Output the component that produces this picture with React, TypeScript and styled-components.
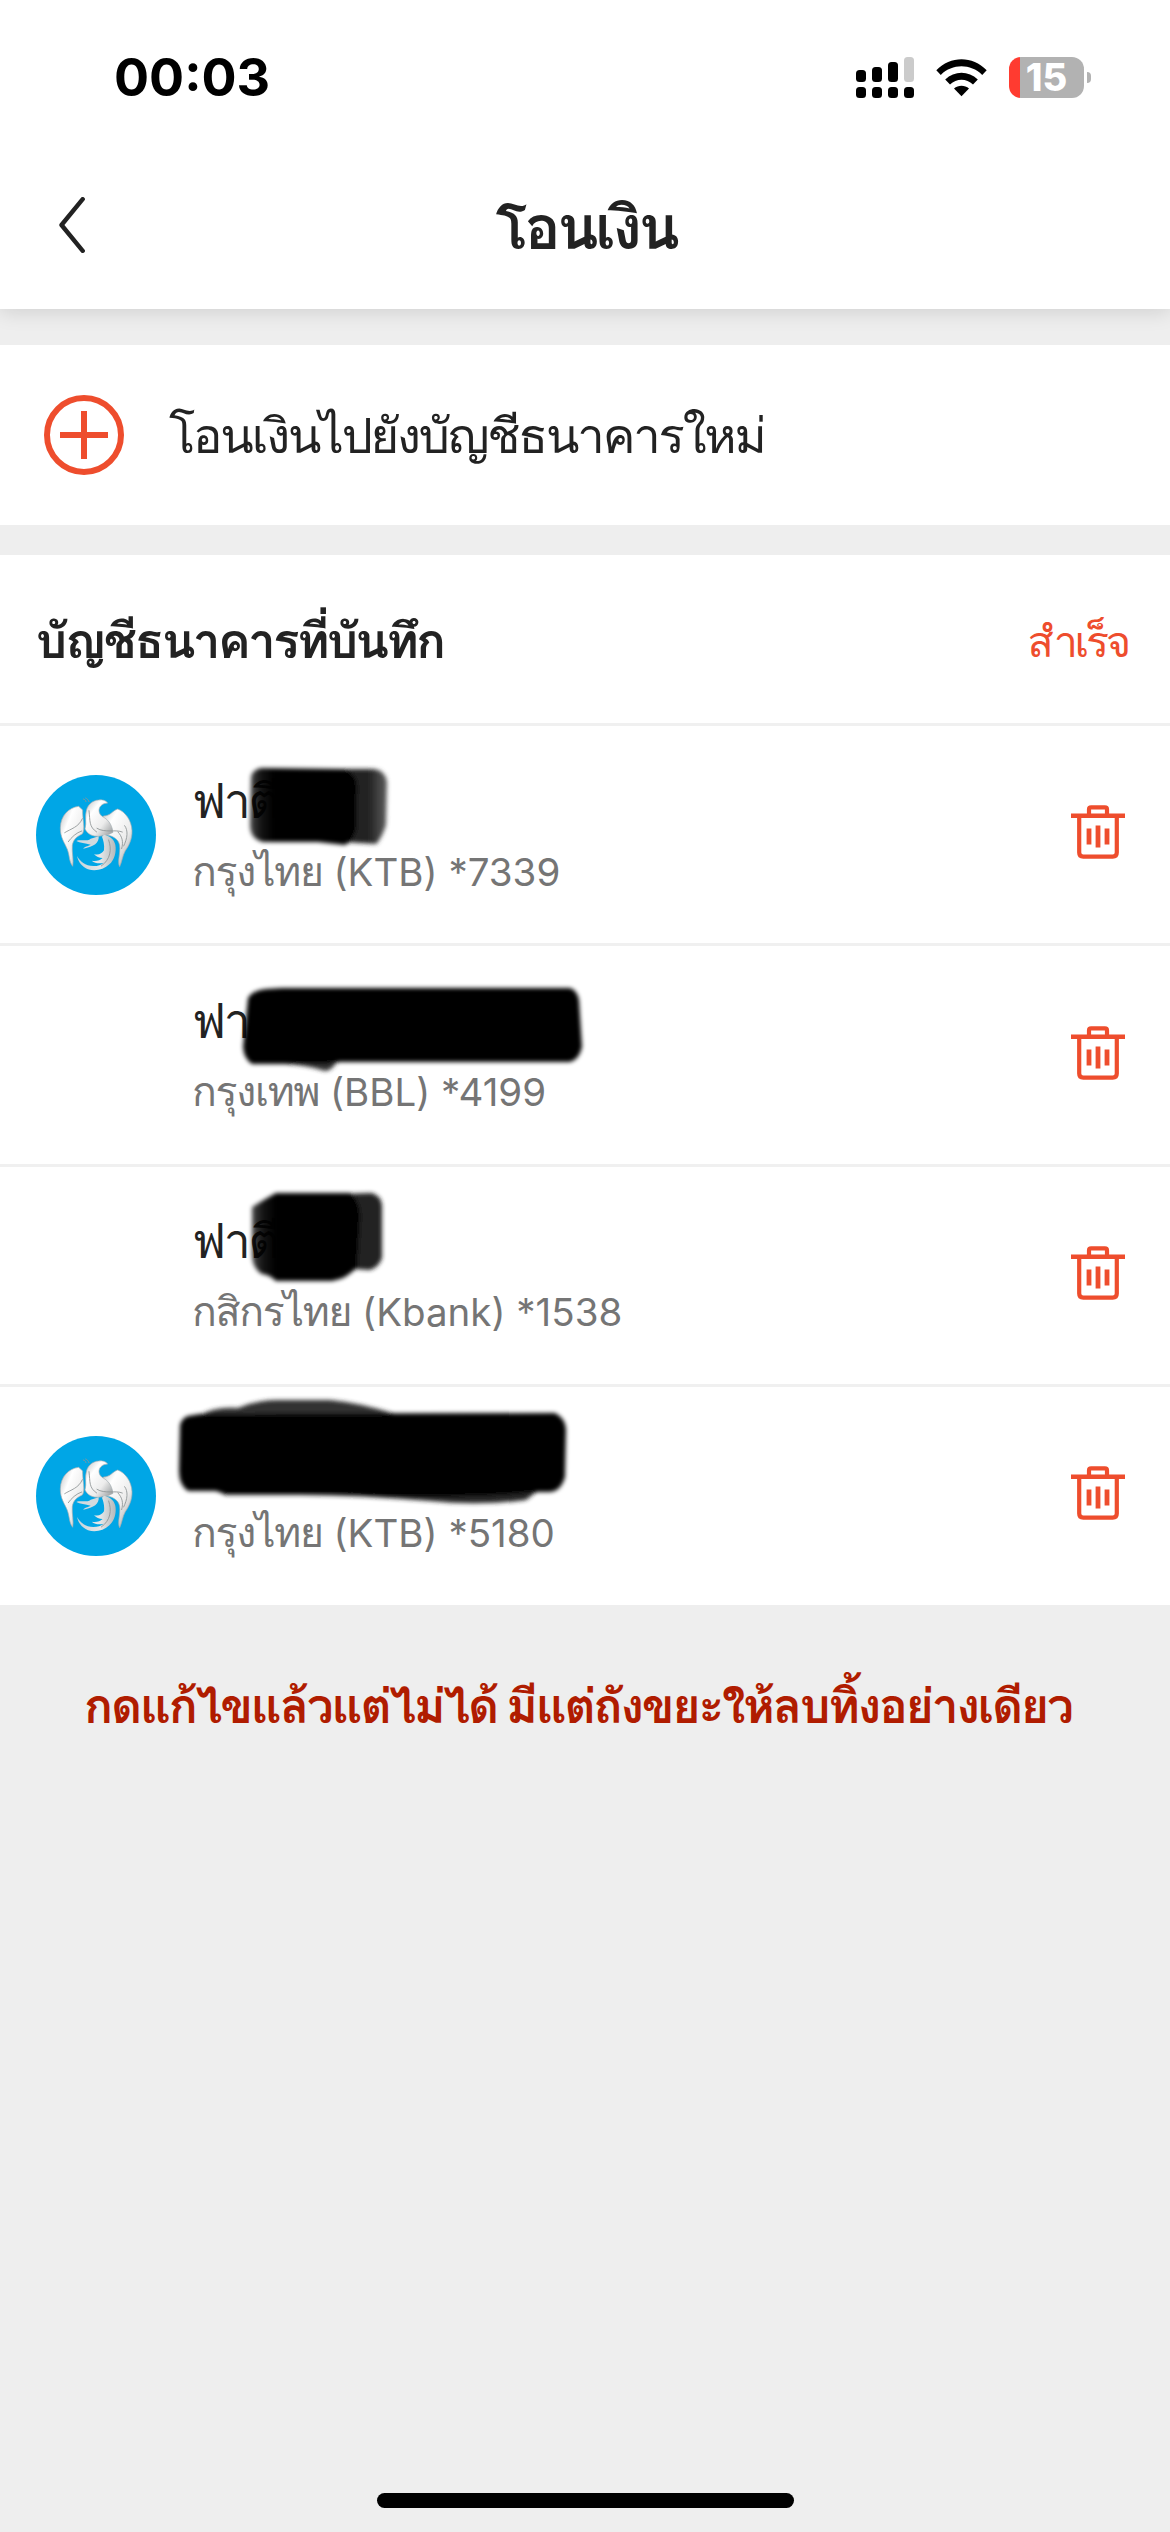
import styled, { createGlobalStyle } from "styled-components";

const accounts = [
    { id: 1, name: "ฟาตี", bank: "กรุงไทย", code: "(KTB)", digits: "*7339", ktb: true },
    { id: 2, name: "ฟาตี", bank: "กรุงเทพ", code: "(BBL)", digits: "*4199", ktb: false },
    { id: 3, name: "ฟาตี", bank: "กสิกรไทย", code: "(Kbank)", digits: "*1538", ktb: false },
    { id: 4, name: "", bank: "กรุงไทย", code: "(KTB)", digits: "*5180", ktb: true },
];

const SignalIcon = () => (
    <svg width="58" height="41" viewBox="0 0 58 41">
        <rect x="0" y="13" width="10" height="12" rx="3.5" />
        <rect x="16" y="10" width="10" height="15" rx="3.5" />
        <rect x="32" y="5" width="10" height="20" rx="3.5" />
        <rect x="48" y="0" width="10" height="25" rx="3.5" fill="#cbcbcb" />
        {[0, 16, 32, 48].map((x) => (
            <rect key={x} x={x} y="30" width="10" height="11" rx="3.5" />
        ))}
    </svg>
);

const WifiIcon = () => (
    <svg width="51" height="41" viewBox="0 -2 51 41">
        <path d="M0.3 11.2C14.5-3.4 36.5-3.4 50.7 11.2L46.2 15.9C34.5 4.5 16.5 4.5 4.8 15.9Z" />
        <path d="M9.2 20.5C18.5 11.4 32.5 11.4 41.8 20.5L37 25.5C30.5 19 20.5 19 14 25.5Z" />
        <path d="M18 29.5C22.3 25.7 28.7 25.7 33 29.5L25.5 37.3Z" />
    </svg>
);

const BackIcon = () => (
    <svg width="26" height="56" viewBox="0 0 26 56" fill="none">
        <path d="M23.7 2.2L2.5 28L23.7 53.8" stroke="#222" strokeWidth="4.4" strokeLinecap="round" strokeLinejoin="round" />
    </svg>
);

const PlusIcon = () => (
    <svg width="80" height="80" viewBox="0 0 80 80" fill="none" stroke="#ee4d2d">
        <circle cx="40" cy="40" r="37" strokeWidth="6" />
        <path d="M40 16V64M16 40H64" strokeWidth="6" />
    </svg>
);

const TrashIcon = () => (
    <svg width="54" height="54" viewBox="0 0 54 54" fill="none" stroke="#ee4d2d" strokeWidth="4.2">
        <path d="M0 10.8H54" strokeWidth="4.6" />
        <path d="M18 10V4.5Q18 2.4 20.1 2.4H33.9Q36 2.4 36 4.5V10" />
        <path d="M8.2 12V47.5Q8.2 51.6 12.3 51.6H41.7Q45.8 51.6 45.8 47.5V12" />
        <path d="M18 23.5V39.5M27 20.5V42.5M36 23.5V39.5" strokeWidth="4.8" />
    </svg>
);

const KtbLogo = () => (
    <svg width="120" height="120" viewBox="48 45 360 360">
        <defs>
            <linearGradient id="wing" x1="0" y1="0" x2="1" y2="1">
                <stop offset="0" stopColor="#b9bcbe" />
                <stop offset="0.3" stopColor="#ffffff" />
                <stop offset="0.65" stopColor="#ececec" />
                <stop offset="1" stopColor="#8f9395" />
            </linearGradient>
            <linearGradient id="tail" x1="0" y1="0" x2="1" y2="0">
                <stop offset="0" stopColor="#c4d3da" />
                <stop offset="0.6" stopColor="#e6e8e9" />
                <stop offset="1" stopColor="#b4b9bb" />
            </linearGradient>
        </defs>
        <circle cx="228" cy="225" r="180" fill="#00a6e6" />
        <g fill="url(#wing)" stroke="#a3adb2" strokeWidth="2" strokeLinejoin="round">
            <path d="M176 139C145 143 122 168 121 203C120 232 135 250 142 268C149 286 147 306 158 319C162 300 155 280 157 256C160 238 171 229 187 222C197 208 187 178 188 150Z" />
            <path d="M250 168C272 168 278 151 293 147C316 155 335 182 336 212C337 238 326 258 316 272C307 288 306 306 299 320C291 306 302 280 299 257C297 243 288 234 273 228L236 219Z" />
            <path d="M236 120C218 121 205 133 200 148C193 170 201 187 195 207C203 223 218 229 234 229C250 228 266 225 279 217C275 190 263 178 246 169C231 156 236 137 252 131L263 129C257 121 247 118 236 120Z" />
        </g>
        {/* tail, curling under the body */}
        <path
            d="M252 224C268 227 282 236 286 254C290 276 283 300 268 313C252 329 226 335 204 328C186 320 175 306 171 288C180 304 196 318 220 318C234 318 244 315 251 308C238 312 225 310 215 302C228 304 240 302 248 294C238 294 228 290 222 282C234 286 246 282 252 271C254 254 250 240 246 230Z"
            fill="url(#tail)"
        />
        <path d="M236 229C238 248 222 261 190 266C192 259 204 259 212 254C196 249 180 249 169 243C180 238 202 245 212 236Z" fill="#d3dade" />
        <g fill="none" stroke="#8f9496" strokeWidth="2.6" strokeLinecap="round">
            <path d="M134 218C153 206 176 202 187 176M145 245C154 232 169 218 185 213" />
            <path d="M207 152C211 184 206 200 230 216M231 205C255 220 287 207 307 216M314 197C325 211 323 234 311 258M294 216C306 229 311 244 305 266" />
            <path d="M266 240C276 268 272 298 244 318M198 125C196 119 193 117 190 117M207 125C205 119 201 115 197 114" />
        </g>
    </svg>
);

// marker strokes over the account names, in row coordinates
const Scribble = ({ id }: { id: number }) => (
    <ScribbleLayer viewBox="0 0 660 218">
        <defs>
            <filter id="soft" x="-10%" y="-20%" width="120%" height="140%">
                <feGaussianBlur stdDeviation="2.2" />
            </filter>
            <linearGradient id="fadeRight" x1="0" x2="1">
                <stop offset="0.6" stopColor="#222" />
                <stop offset="1" stopColor="#5c5c5c" />
            </linearGradient>
            <linearGradient id="fadeLeft" x1="0" x2="1">
                <stop offset="0" stopColor="#000" stopOpacity="0.72" />
                <stop offset="0.1" stopColor="#000" stopOpacity="0.92" />
                <stop offset="0.22" stopColor="#000" />
            </linearGradient>
        </defs>
        <g filter="url(#soft)">
            {id === 1 && (
                <>
                    <path d="M340 43L374 43Q386 45 387 56L386 99Q382 112 376 118L345 116Z" fill="url(#fadeRight)" />
                    <path d="M261 42L343 43Q356 47 357 60L356 104Q352 116 345 119L318 116L263 116Q250 113 250 99L251 51Q252 44 261 42Z" fill="url(#fadeLeft)" />
                </>
            )}
            {id === 2 && (
                <>
                    <path d="M290 110L337 116Q331 125 325 125Q306 119 285 118Z" fill="#333" />
                    <path d="M282 42H570Q577 44 579 54L582 101Q579 114 570 116H340L325 118L252 118Q244 113 243 101L248 52Q253 44 266 43Z" fill="#050505" />
                </>
            )}
            {id === 3 && (
                <>
                    <path d="M340 27L372 26Q381 29 382 38L382 91Q379 100 370 103L340 101Z" fill="#222" />
                    <path d="M276 26H350Q361 35 360 52L357 100Q347 112 332 114H276Q270 108 262 107Q251 101 252 84L252 40L267 31Z" fill="url(#fadeLeft)" />
                </>
            )}
            {id === 4 && (
                <>
                    <path d="M198 29Q215 19 238 21Q259 12 282 13H330Q361 16 395 27L390 34H200Z" fill="#303030" />
                    <path d="M218 98H545L526 113Q478 119 430 114Q360 108 300 108H225Z" fill="#252525" />
                    <path d="M188 29L200 27L555 26Q565 31 566 42L565 90Q561 104 550 105H538L500 108Q410 112 340 107L224 107L216 104L188 104Q179 98 179 84L180 38Q182 31 188 29Z" fill="#000" />
                </>
            )}
        </g>
    </ScribbleLayer>
);

const App = () => {
    return (
        <>
            <GlobalStyle />
            <Screen>
                <Header>
                    <StatusBar>
                        <Clock>00:03</Clock>
                        <StatusIcons>
                            <SignalIcon />
                            <WifiIcon />
                            <Battery>15</Battery>
                        </StatusIcons>
                    </StatusBar>
                    <NavBar>
                        <BackIcon />
                        <PageTitle>โอนเงิน</PageTitle>
                    </NavBar>
                </Header>

                <NewAccount>
                    <PlusIcon />
                    <NewAccountText>โอนเงินไปยังบัญชีธนาคารใหม่</NewAccountText>
                </NewAccount>

                <SavedSection>
                    <SavedHeader>
                        <SavedTitle>บัญชีธนาคารที่บันทึก</SavedTitle>
                        <DoneButton>สำเร็จ</DoneButton>
                    </SavedHeader>
                    {accounts.map((account) => (
                        <AccountRow key={account.id}>
                            <Avatar>{account.ktb && <KtbLogo />}</Avatar>
                            <AccountInfo>
                                <AccountName>{account.name}</AccountName>
                                <AccountBank>
                                    <BankName>{account.bank}</BankName> {account.code} {account.digits}
                                </AccountBank>
                            </AccountInfo>
                            <DeleteButton>
                                <TrashIcon />
                            </DeleteButton>
                            <Scribble id={account.id} />
                        </AccountRow>
                    ))}
                </SavedSection>

                <Note>กดแก้ไขแล้วแต่ไม่ได้ มีแต่ถังขยะให้ลบทิ้งอย่างเดียว</Note>
                <HomeIndicator />
            </Screen>
        </>
    );
};

export default App;

const GlobalStyle = createGlobalStyle`
    * {
        box-sizing: border-box;
    }

    body {
        margin: 0;
        background: #eeeeee;
        font-family: Inter, Loma, "Noto Sans Thai Looped", "Noto Sans Thai", sans-serif;
        color: #222;
    }

    svg {
        display: block;
        flex-shrink: 0;
    }

    p {
        margin: 0;
        white-space: nowrap;
    }
`;

const Screen = styled.div`
    width: 1170px;
    height: 2532px;
    display: flex;
    flex-direction: column;
    background: #eeeeee;
    overflow: hidden;
`;

const Header = styled.header`
    height: 309px;
    background: white;
    box-shadow: 0 2px 20px rgba(0, 0, 0, 0.14);
`;

const StatusBar = styled.div`
    height: 156px;
    display: flex;
    justify-content: space-between;
    padding: 57px 79px 0 114px;
`;

const Clock = styled.p`
    font-size: 52px;
    line-height: 42px;
    font-weight: 700;
    color: black;
`;

const StatusIcons = styled.div`
    display: flex;
    align-items: flex-start;
    gap: 22px;
`;

const Battery = styled.div`
    position: relative;
    width: 75px;
    height: 41px;
    margin-right: 7px;
    border-radius: 12px;
    background: linear-gradient(90deg, #ff3b30 11px, #b2b2b2 11px);
    color: white;
    font-size: 38px;
    font-weight: 800;
    line-height: 41px;
    text-align: center;

    &::after {
        content: "";
        position: absolute;
        left: 78px;
        top: 15px;
        width: 4px;
        height: 11px;
        border-radius: 0 4px 4px 0;
        background: #b2b2b2;
    }
`;

const NavBar = styled.div`
    height: 138px;
    display: flex;
    align-items: center;
    padding: 0 85px 0 59px;
`;

const PageTitle = styled.p`
    flex: 1;
    padding: 3px 0 0 2px;
    text-align: center;
    font-size: 60px;
    line-height: 80px;
    letter-spacing: -3.2px;
    font-weight: 600;
`;

const NewAccount = styled.div`
    height: 180px;
    margin-top: 36px;
    display: flex;
    align-items: center;
    gap: 45px;
    padding-left: 44px;
    background: white;
`;

const NewAccountText = styled.p`
    padding-top: 2px;
    font-size: 49px;
    line-height: 70px;
    letter-spacing: -2.2px;
`;

const SavedSection = styled.section`
    margin-top: 30px;
    background: white;
`;

const SavedHeader = styled.div`
    height: 168px;
    display: flex;
    align-items: center;
    justify-content: space-between;
    padding: 4px 42px 0 36px;
`;

const SavedTitle = styled.p`
    font-size: 49px;
    line-height: 70px;
    letter-spacing: -2.5px;
    font-weight: 600;
`;

const DoneButton = styled.p`
    font-size: 43px;
    line-height: 70px;
    letter-spacing: -3.2px;
    color: #ee4d2d;
`;

const AccountRow = styled.div`
    position: relative;
    height: 220.4px;
    display: flex;
    align-items: center;
    padding: 0 45px 0 36px;
    border-top: 3px solid #f0f0f0;
`;

const Avatar = styled.div`
    width: 120px;
    height: 120px;
`;

const AccountInfo = styled.div`
    flex: 1;
    margin-left: 36px;
`;

const AccountName = styled.p`
    height: 70px;
    font-size: 48px;
    line-height: 68px;
    letter-spacing: -2.2px;
`;

const AccountBank = styled.p`
    height: 66px;
    font-size: 38.5px;
    line-height: 68px;
    color: #757575;
`;

const BankName = styled.span`
    font-size: 41px;
    letter-spacing: -1.3px;
`;

const DeleteButton = styled.div`
    padding-bottom: 5px;
`;

const ScribbleLayer = styled.svg`
    position: absolute;
    left: 0;
    top: 0;
    width: 660px;
    height: 218px;
`;

const Note = styled.p`
    margin-top: 66px;
    padding-left: 84px;
    font-size: 48px;
    line-height: 70px;
    letter-spacing: -2.15px;
    font-weight: 700;
    color: #b01c00;
`;

const HomeIndicator = styled.div`
    width: 417px;
    height: 15px;
    margin: auto auto 24px;
    border-radius: 8px;
    background: black;
`;
